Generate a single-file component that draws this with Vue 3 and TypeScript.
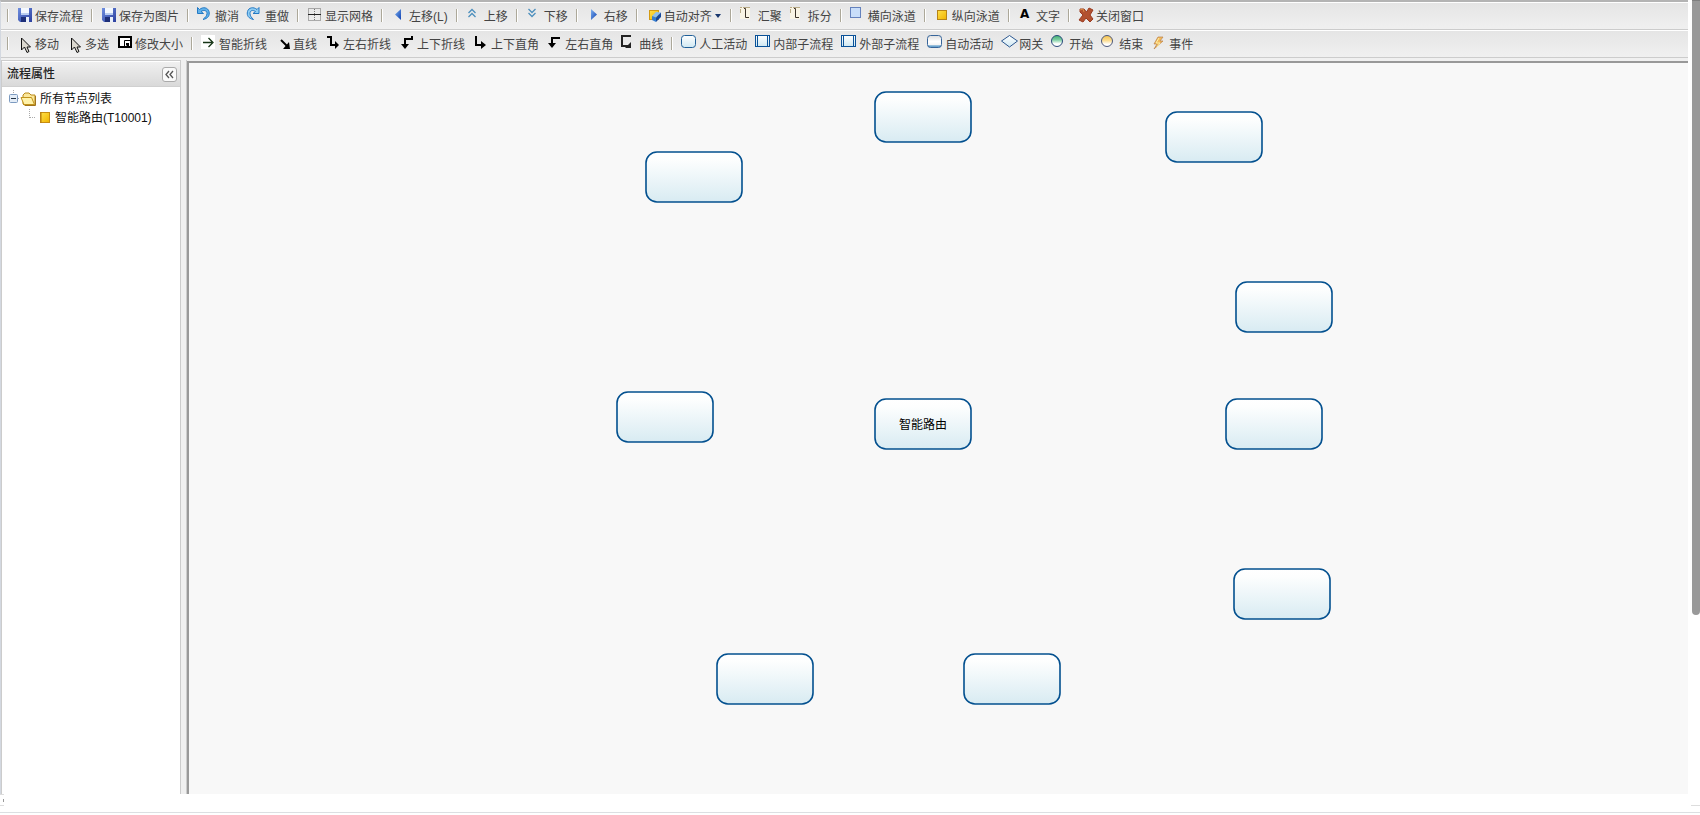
<script setup lang="ts">
interface Tool {
  icon: string
  label: string
  menu?: boolean
}

interface FlowNode {
  id: number
  x: number
  y: number
  label?: string
}

const commandGroups: Tool[][] = [
  [{ icon: 'save', label: '保存流程' }],
  [{ icon: 'save', label: '保存为图片' }],
  [{ icon: 'undo', label: '撤消' }, { icon: 'redo', label: '重做' }],
  [{ icon: 'grid', label: '显示网格' }],
  [{ icon: 'left', label: '左移(L)' }],
  [{ icon: 'up', label: '上移' }],
  [{ icon: 'down', label: '下移' }],
  [{ icon: 'right', label: '右移' }],
  [{ icon: 'align', label: '自动对齐', menu: true }],
  [{ icon: 'branch', label: '汇聚' }, { icon: 'branch', label: '拆分' }],
  [{ icon: 'lane-h', label: '横向泳道' }],
  [{ icon: 'lane-v', label: '纵向泳道' }],
  [{ icon: 'text', label: '文字' }],
  [{ icon: 'close', label: '关闭窗口' }],
]

const shapeGroups: Tool[][] = [
  [
    { icon: 'cursor', label: '移动' },
    { icon: 'cursor', label: '多选' },
    { icon: 'resize', label: '修改大小' },
  ],
  [
    { icon: 'smart', label: '智能折线' },
    { icon: 'line', label: '直线' },
    { icon: 'fold-lr', label: '左右折线' },
    { icon: 'fold-ud', label: '上下折线' },
    { icon: 'angle-ud', label: '上下直角' },
    { icon: 'angle-lr', label: '左右直角' },
    { icon: 'curve', label: '曲线' },
  ],
  [
    { icon: 'manual', label: '人工活动' },
    { icon: 'subflow', label: '内部子流程' },
    { icon: 'subflow', label: '外部子流程' },
    { icon: 'auto', label: '自动活动' },
    { icon: 'gateway', label: '网关' },
    { icon: 'start', label: '开始' },
    { icon: 'end', label: '结束' },
    { icon: 'event', label: '事件' },
  ],
]

const bars = [commandGroups, shapeGroups]

const nodes: FlowNode[] = [
  { id: 1, x: 685, y: 28 },
  { id: 2, x: 976, y: 48 },
  { id: 3, x: 456, y: 88 },
  { id: 4, x: 1046, y: 218 },
  { id: 5, x: 427, y: 328 },
  { id: 6, x: 685, y: 335, label: '智能路由' },
  { id: 7, x: 1036, y: 335 },
  { id: 8, x: 1044, y: 505 },
  { id: 9, x: 527, y: 590 },
  { id: 10, x: 774, y: 590 },
]
</script>

<template>
  <svg class="sprites" width="0" height="0" aria-hidden="true">
    <defs>
      <linearGradient id="g-blue" x1="0" y1="0" x2="1" y2="1">
        <stop offset="0" stop-color="#7fb2f0" /><stop offset="1" stop-color="#0d3fb0" />
      </linearGradient>
      <linearGradient id="g-save" x1="0" y1="0" x2="1" y2="1">
        <stop offset="0" stop-color="#6f8fe0" /><stop offset="1" stop-color="#2b3f9e" />
      </linearGradient>
      <linearGradient id="g-sky" x1="0" y1="0" x2="0" y2="1">
        <stop offset="0" stop-color="#ffffff" /><stop offset="1" stop-color="#cfe8f2" />
      </linearGradient>
      <linearGradient id="g-node" x1="0" y1="0" x2="0" y2="1">
        <stop offset="0" stop-color="#ffffff" /><stop offset="0.15" stop-color="#fdfefe" /><stop offset="1" stop-color="#d8ebf2" />
      </linearGradient>
      <linearGradient id="g-auto" x1="0" y1="0" x2="0" y2="1">
        <stop offset="0" stop-color="#dedede" /><stop offset="0.5" stop-color="#ffffff" />
        <stop offset="0.8" stop-color="#f4f4f4" /><stop offset="0.85" stop-color="#6ba4cf" /><stop offset="1" stop-color="#6ba4cf" />
      </linearGradient>
      <linearGradient id="g-gold" x1="0" y1="0" x2="1" y2="1">
        <stop offset="0" stop-color="#ffe04a" /><stop offset="1" stop-color="#f0b400" />
      </linearGradient>
      <linearGradient id="g-green" x1="0" y1="0" x2="0" y2="1">
        <stop offset="0" stop-color="#3fae72" /><stop offset="0.4" stop-color="#7fcfa3" /><stop offset="0.75" stop-color="#ffffff" />
      </linearGradient>
      <linearGradient id="g-amber" x1="0" y1="0" x2="0" y2="1">
        <stop offset="0" stop-color="#f5c24a" /><stop offset="0.45" stop-color="#fbdc90" /><stop offset="0.8" stop-color="#ffffff" />
      </linearGradient>
    </defs>

    <symbol id="i-save" overflow="visible">
      <path d="M1 1h14v14H3l-2-2z" fill="url(#g-save)" />
      <path d="M4 1h8v7H4z" fill="#f3f8ff" />
      <path d="M4 6h8v2H4z" fill="#b9cdf0" />
      <path d="M4 10h8v5H4z" fill="#1d2f78" />
      <path d="M9 10h3v5H9z" fill="#e9effa" />
    </symbol>
    <symbol id="i-undo" overflow="visible">
      <path d="M.5.5v6h6L4 4.500c3-2 6-1 6 2 0 2.500-2 4-4 6 5-1 7-4 6-8-1-4-6-5-9.500-2z" fill="#62b2ea" stroke="#2379c4" stroke-linejoin="round" />
    </symbol>
    <symbol id="i-redo" overflow="visible">
      <path d="M12 .5v6H6l2.500-2C5.500 2.500 3 3.500 3 6.500c0 2.500 1.500 4 3.500 6C1.500 11.500-.5 8.500.5 4.500c1-4 6-5 9.500-2z" fill="#8fcdf3" stroke="#2379c4" stroke-linejoin="round" />
    </symbol>
    <symbol id="i-grid" overflow="visible">
      <rect x="1.500" y="1.500" width="12" height="12" fill="none" stroke="#666" stroke-dasharray="1 1" />
      <path d="M7.500 2v12" stroke="#777" stroke-dasharray="1 1" />
      <path d="M1 7.500h13" stroke="#222" />
    </symbol>
    <symbol id="i-left" overflow="visible"><path d="M4 7.500 10 2v11z" fill="url(#g-blue)" /></symbol>
    <symbol id="i-right" overflow="visible"><path d="M11 7.500 5 2v11z" fill="url(#g-blue)" /></symbol>
    <symbol id="i-up" overflow="visible">
      <path d="m2.500 6 3.500-3.500L9.500 6m-7 4L6 6.500 9.500 10" fill="none" stroke="#4d8fbd" stroke-width="1.300" />
    </symbol>
    <symbol id="i-down" overflow="visible">
      <path d="M2.500 2 6 5.500 9.500 2m-7 4L6 9.500 9.500 6" fill="none" stroke="#4d8fbd" stroke-width="1.300" />
    </symbol>
    <symbol id="i-align" overflow="visible">
      <rect x="3.500" y="3.500" width="9" height="9" fill="url(#g-gold)" stroke="#d39a13" />
      <path d="m6 9 4-4 5 .5-5 5z" fill="#8dc0f0" />
      <path d="m6 9 4 1.500V15l-4-2z" fill="#367fd0" />
      <path d="M10 10.500V15l5-5V5.500z" fill="#16489c" />
    </symbol>
    <symbol id="i-branch" overflow="visible">
      <path d="M0 0h10v12H0z" fill="#faf5e4" />
      <path d="M0 .5h2M3 .5h7M.5 2v4" stroke="#b8ab87" />
      <path d="M4 1.500h1.500v9H9" fill="none" stroke="#3e352a" />
    </symbol>
    <symbol id="i-lane-h" overflow="visible">
      <rect x=".5" y=".5" width="10" height="10" fill="#c9def9" stroke="#6582bd" />
    </symbol>
    <symbol id="i-lane-v" overflow="visible">
      <rect x="3.500" y="3.500" width="9" height="9" fill="url(#g-gold)" stroke="#b78416" />
    </symbol>
    <symbol id="i-close" overflow="visible">
      <path d="M2 2h4l2.500 3L11 1l4 2-3 5 3 4-3 3-4-4-3 4-4-2 4-5-3-3z" fill="#b2512f" stroke="#9a3b20" />
      <path d="m2 3 3-1 1 3" fill="none" stroke="#d98b45" />
    </symbol>
    <symbol id="i-cursor" overflow="visible">
      <path d="M4.500 3v12l3-3 2.500 5.500 2-1-2-4.500h3.500z" fill="#dcd9d0" stroke="#111" />
    </symbol>
    <symbol id="i-resize" overflow="visible">
      <path d="M2 2h12v10H2z" fill="#fff" stroke="#000" stroke-width="2" />
      <path d="M7.500 12V5.500H13" fill="none" stroke="#000" />
      <path d="M9 10V8h3v3h-2z" />
    </symbol>
    <symbol id="i-smart" overflow="visible">
      <path d="M0 0h14v14H0z" fill="#fff" />
      <path d="M2 7.500h9M7.500 3l4.500 4.500L7.500 12" fill="none" stroke="#163516" stroke-width="1.300" />
    </symbol>
    <symbol id="i-line" overflow="visible">
      <path d="m6 5 7 7" stroke="#000" stroke-width="2" /><path d="M15 14H8l6-7z" />
    </symbol>
    <symbol id="i-fold-lr" overflow="visible">
      <path d="M2 2h4v8h5" fill="none" stroke="#000" stroke-width="2" /><path d="m10 6 4 4-4 4z" />
    </symbol>
    <symbol id="i-fold-ud" overflow="visible">
      <path d="M13 1v3H6v6" fill="none" stroke="#000" stroke-width="2" /><path d="m2 9 4 5 4-5z" />
    </symbol>
    <symbol id="i-angle-ud" overflow="visible">
      <path d="M3 1v9h6" fill="none" stroke="#000" stroke-width="2" /><path d="m8 6 5 4-5 4z" />
    </symbol>
    <symbol id="i-angle-lr" overflow="visible">
      <path d="M13 3H5v6" fill="none" stroke="#000" stroke-width="2" /><path d="m1 8 4 5 4-5z" />
    </symbol>
    <symbol id="i-curve" overflow="visible">
      <path d="M10 1H1v10h6" fill="none" stroke="#222" stroke-width="2" /><path d="M10 7v6H4z" fill="#222" />
    </symbol>
    <symbol id="i-manual" overflow="visible">
      <rect x=".5" y=".5" width="14" height="12" rx="3" fill="url(#g-sky)" stroke="#1f5f98" />
    </symbol>
    <symbol id="i-subflow" overflow="visible">
      <rect x=".5" y=".5" width="14" height="11" fill="url(#g-sky)" stroke="#0a5299" />
      <path d="M2.500 1v10M12.500 1v10" stroke="#0a5299" />
    </symbol>
    <symbol id="i-auto" overflow="visible">
      <rect x=".5" y=".5" width="14" height="12" rx="3" fill="url(#g-auto)" stroke="#37659a" />
    </symbol>
    <symbol id="i-gateway" overflow="visible">
      <path d="m.5 6 8-5.500 8 5.500-8 6z" fill="url(#g-sky)" stroke="#2c5890" />
    </symbol>
    <symbol id="i-start" overflow="visible">
      <circle cx="6" cy="6" r="5.500" fill="url(#g-green)" stroke="#2b4a7c" />
    </symbol>
    <symbol id="i-end" overflow="visible">
      <circle cx="6" cy="6" r="5.500" fill="url(#g-amber)" stroke="#4c587c" />
    </symbol>
    <symbol id="i-event" overflow="visible">
      <path d="M7 2h5L9 6h3l-9 8 3-5H3z" fill="#f3b95a" stroke="#b9814a" stroke-width=".7" />
      <path d="m8 3-3 5h4l-3 4" fill="none" stroke="#fdf0a8" />
    </symbol>
  </svg>

  <div class="page">
    <div class="frame">
      <div class="workspace">
        <div v-for="(groups, b) in bars" :key="b" class="toolbar" role="toolbar">
          <template v-for="(group, g) in groups" :key="g">
            <span class="separator"></span>
            <button v-for="tool in group" :key="tool.label" type="button" class="tool">
              <span v-if="tool.icon === 'text'" class="letter" aria-hidden="true">A</span>
              <svg v-else width="16" height="16" aria-hidden="true"><use :href="'#i-' + tool.icon" /></svg>
              <span class="tool-label">{{ tool.label }}</span>
              <svg v-if="tool.menu" class="caret" width="8" height="4" aria-hidden="true"><path d="M1 0h6L4 4z" fill="#17366e" /></svg>
            </button>
          </template>
        </div>

        <div class="body">
          <aside class="sidebar">
            <header class="panel-head">
              <h1 class="panel-title">流程属性</h1>
              <button type="button" class="collapse" aria-label="折叠">
                <svg width="9" height="7" aria-hidden="true"><path d="M4 0 1 3.500 4 7M8 0 5 3.500 8 7" fill="none" stroke="#555" stroke-width="1.300" /></svg>
              </button>
            </header>
            <ul class="tree">
              <li>
                <div class="tree-row">
                  <button type="button" class="toggle" aria-label="收起节点">
                    <svg width="12" height="18" aria-hidden="true">
                      <path d="M5.500 0v4" stroke="#aaa" stroke-dasharray="1 1" />
                      <rect x="1.500" y="4.500" width="8" height="8" rx="1" fill="#e4edf7" stroke="#7c9ac0" />
                      <path d="M3 8.500h5" stroke="#234" />
                      <path d="M10 8.500h2" stroke="#aaa" stroke-dasharray="1 1" />
                    </svg>
                  </button>
                  <svg width="16" height="16" aria-hidden="true">
                    <path d="M3 13V4l2-2h4l2 2h4v10H4z" fill="#fbe79a" stroke="#b98a1b" />
                    <path d="M1 6.500h10.500l3 7H4z" fill="#fff2a9" stroke="#c1931c" />
                    <path d="M15.500 5v9.500H5" fill="none" stroke="#a1741d" />
                  </svg>
                  <span class="tree-label">所有节点列表</span>
                </div>
                <ul class="tree-children">
                  <li class="tree-row">
                    <svg width="10" height="18" aria-hidden="true"><path d="M.5 0v9M1 8.500h6" fill="none" stroke="#aaa" stroke-dasharray="1 1" /></svg>
                    <svg width="12" height="13" aria-hidden="true">
                      <rect x="1.500" y="1.500" width="9" height="10" fill="url(#g-gold)" stroke="#c78d12" />
                      <path d="M2 1v11" stroke="#b47a10" />
                    </svg>
                    <span class="tree-label">智能路由(T10001)</span>
                  </li>
                </ul>
              </li>
            </ul>
          </aside>
          <div class="splitter"></div>
          <main class="canvas">
            <div v-for="node in nodes" :key="node.id" class="node" :style="{ left: node.x + 'px', top: node.y + 'px' }">
              <svg width="98" height="52" aria-hidden="true">
                <rect x="1" y="1" width="96" height="50" rx="11" fill="url(#g-node)" stroke="#03508f" stroke-width="1.600" />
              </svg>
              <span v-if="node.label" class="node-label">{{ node.label }}</span>
            </div>
          </main>
        </div>
      </div>
      <div class="scroll-track"><div class="scroll-thumb"></div></div>
    </div>
    <footer class="footer">
      <div class="footer-edges"><span class="edge-left"></span><span class="edge-right"></span></div>
    </footer>
  </div>
</template>

<style>
body {
  margin: 0;
  background: #fff;
}
</style>

<style scoped>
.sprites {
  position: absolute;
}
.page {
  display: flex;
  flex-direction: column;
  min-height: 100vh;
  font: 12px/18px "Liberation Sans", "Noto Sans CJK SC", sans-serif;
  color: #111;
}
.page,
.page * {
  box-sizing: border-box;
}
.page svg {
  display: block;
  flex: none;
  overflow: visible;
}
button {
  border: 0;
  padding: 0;
  background: none;
  font: inherit;
  color: inherit;
}
.frame {
  flex: 1;
  display: flex;
  gap: 4px;
}
.workspace {
  flex: 1;
  min-width: 0;
  display: flex;
  flex-direction: column;
  border-top: 2px solid #b4b4b4;
  border-left: 1px solid #d3d8e0;
  background: #f0f0f0;
}
.toolbar {
  display: flex;
  align-items: flex-start;
  gap: 8px;
  height: 28px;
  padding: 4px 0 0 6px;
  border-top: 1px solid #fff;
  border-bottom: 1px solid #ccc;
  background: linear-gradient(#e5e5e5, #f0f0f0);
  white-space: nowrap;
}
.separator {
  width: 2px;
  height: 13px;
  margin-top: 2px;
  border-left: 1px solid #aca899;
  border-right: 1px solid #fff;
}
.tool {
  display: flex;
  gap: 2px;
  color: #444;
}
.tool-label {
  line-height: 20px;
}
.letter {
  width: 16px;
  padding-left: 2px;
  font: 700 12px/14px "DejaVu Sans", sans-serif;
  text-align: left;
  color: #000;
}
.caret {
  margin-top: 7px;
}
.body {
  flex: 1;
  display: flex;
  padding-top: 2px;
}
.sidebar {
  width: 180px;
  border: 1px solid #ccc;
  border-bottom: 0;
  background: #fff;
}
.panel-head {
  display: flex;
  align-items: center;
  justify-content: space-between;
  height: 26px;
  padding: 0 3px 0 5px;
  border-top: 1px solid #fff;
  border-bottom: 1px solid #d0d0d0;
  background: linear-gradient(#f0f0f0, #d9d9d9);
}
.panel-title {
  margin: 0;
  font-size: 12px;
  font-weight: 500;
  color: #222;
}
.collapse {
  display: flex;
  align-items: center;
  justify-content: center;
  width: 15px;
  height: 15px;
  border: 1px solid #aaa;
  border-radius: 3px;
  background: #fafafa;
}
.tree,
.tree-children {
  margin: 0;
  padding: 0;
  list-style: none;
}
.tree {
  padding: 2px 0 0 6px;
}
.tree-children {
  padding-left: 21px;
}
.tree-row {
  display: flex;
  align-items: center;
  height: 19px;
  white-space: nowrap;
}
.tree-label {
  margin-left: 4px;
}
.splitter {
  width: 6px;
  border-right: 1px solid #ccc;
}
.canvas {
  position: relative;
  flex: 1;
  min-width: 0;
  overflow: hidden;
  margin-top: 1px;
  border-top: 2px solid #999;
  border-left: 2px solid #999;
  background: #f8f8f8;
}
.node {
  position: absolute;
  display: grid;
  place-items: center;
  color: #000;
}
.node > * {
  grid-area: 1 / 1;
}
.node-label {
  line-height: 20px;
  padding-top: 2px;
}
.scroll-track {
  width: 8px;
  background: #fff;
}
.scroll-thumb {
  height: 77.4%;
  border-top: 1px solid #808080;
  border-radius: 0 0 4px 4px;
  background: #999;
}
.footer {
  height: 21px;
  padding-bottom: 2px;
}
.footer-edges {
  display: flex;
  justify-content: space-between;
  height: 19px;
  border-bottom: 1px solid #dcdfe2;
}
.edge-left {
  display: flex;
  align-items: center;
  justify-content: flex-end;
  width: 4px;
  height: 12px;
  border-top: 1px solid #ddd;
  border-bottom: 1px solid #ddd;
}
.edge-left::after {
  content: "";
  width: 1px;
  height: 3px;
  background: #999;
}
.edge-right {
  width: 9px;
  height: 12px;
  border-bottom: 1px solid #ddd;
}
</style>
